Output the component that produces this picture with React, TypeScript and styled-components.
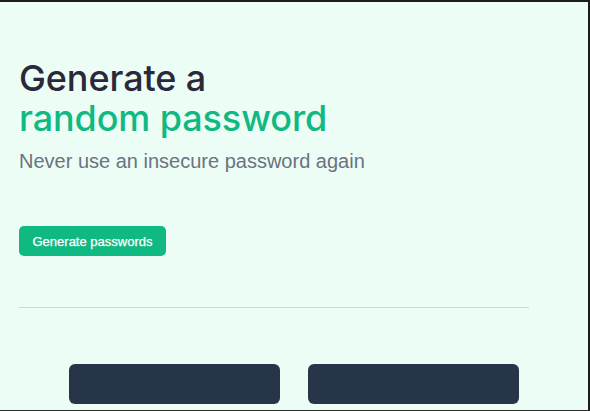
import styled, { createGlobalStyle } from "styled-components";

const GlobalStyle = createGlobalStyle`
  html, body {
    margin: 0;
    padding: 0;
    background: #1b1f1c;
  }
  * {
    box-sizing: border-box;
  }
`;

const Frame = styled.div`
  height: 411px;
  width: 590px;
  background: #ecfdf5;
  border-top: 2px solid #1b1f1c;
  border-right: 2px solid #1b1f1c;
  border-bottom: 1px solid #2a2d2b;
  overflow: hidden;
`;

const Hero = styled.section`
  padding: 56px 0 0 19px;
`;

const Title = styled.h1`
  margin: 0;
  font-family: Inter, "Noto Sans", sans-serif;
  font-size: 36px;
  line-height: 40px;
  font-weight: 500;
  letter-spacing: -0.1px;
  color: #2b283a;
`;

const Accent = styled.span`
  display: block;
  color: #10b981;
`;

const Subtitle = styled.p`
  margin: 9px 0 0;
  font-family: "Liberation Sans", Arial, sans-serif;
  font-size: 20px;
  line-height: 28px;
  color: #6b7280;
`;

const GenerateButton = styled.button`
  margin-top: 51px;
  height: 30px;
  padding: 0 13.5px;
  border: none;
  border-radius: 5px;
  background: #10b981;
  color: #ffffff;
  font-family: "Liberation Sans", Arial, sans-serif;
  font-size: 13px;
  font-weight: 500;
  -webkit-text-stroke: 0.25px #ffffff;
  cursor: pointer;
`;

const Divider = styled.hr`
  margin: 51px 0 0 19px;
  width: 510px;
  border: none;
  border-top: 1px solid #d1d5d8;
`;

const Outputs = styled.div`
  display: flex;
  justify-content: center;
  gap: 28px;
  margin-top: 56px;
`;

const PasswordBox = styled.div`
  width: 211px;
  height: 40px;
  border-radius: 6px;
  background: #273549;
`;

export default function App() {
  return (
    <>
      <GlobalStyle />
      <Frame>
        <Hero>
          <Title>
            Generate a<Accent>random password</Accent>
          </Title>
          <Subtitle>Never use an insecure password again</Subtitle>
          <GenerateButton>Generate passwords</GenerateButton>
        </Hero>
        <Divider />
        <Outputs>
          <PasswordBox />
          <PasswordBox />
        </Outputs>
      </Frame>
    </>
  );
}
